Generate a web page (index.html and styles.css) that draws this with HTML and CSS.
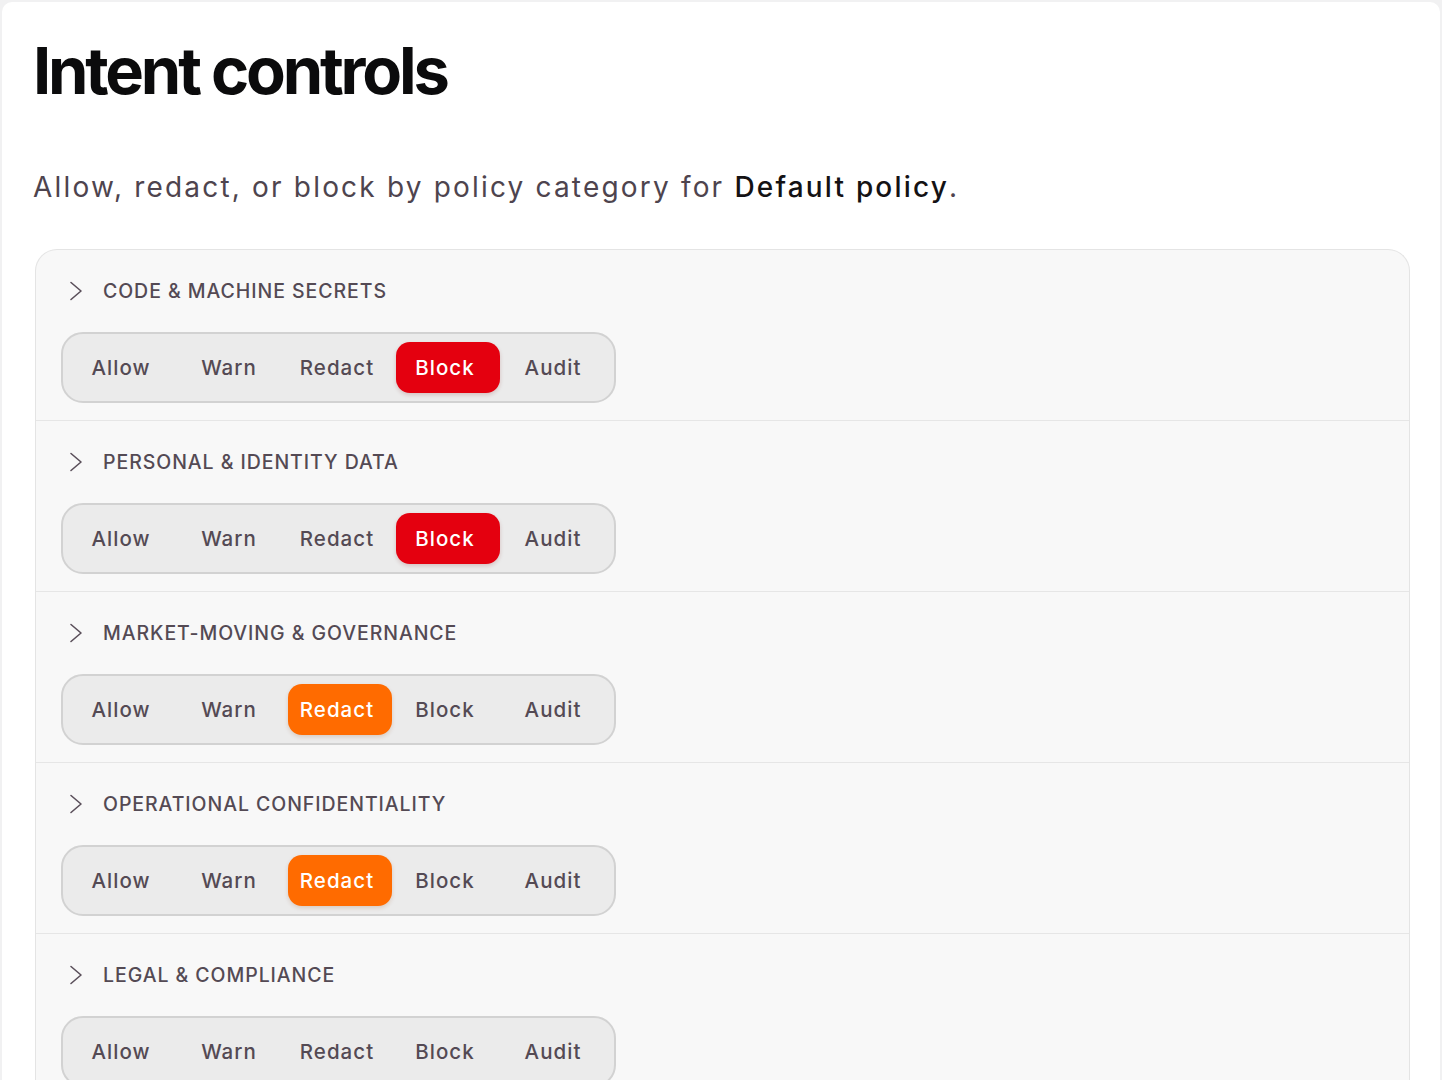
FILE: index.html
```html
<!DOCTYPE html>
<html lang="en">
<head>
<meta charset="utf-8">
<title>Intent controls</title>
<link rel="stylesheet" href="styles.css">
</head>
<body>
<main class="card">
  <h1 class="title">Intent controls</h1>
  <p class="subtitle">Allow, redact, or block by policy category for <strong>Default policy</strong>.</p>

  <section class="panel">
    <div class="group">
      <div class="group-head">
        <svg class="chev" width="16" height="20" viewBox="0 0 16 20"><path d="M3 1.5 L13 10 L3 18.5" fill="none" stroke="currentColor" stroke-width="1.6" stroke-linecap="round" stroke-linejoin="round"/></svg>
        <span class="group-label">Code &amp; machine secrets</span>
      </div>
      <div class="seg">
        <button class="opt">Allow</button><button class="opt">Warn</button><button class="opt">Redact</button><button class="opt opt-block">Block</button><button class="opt">Audit</button>
      </div>
    </div>
    <div class="group">
      <div class="group-head">
        <svg class="chev" width="16" height="20" viewBox="0 0 16 20"><path d="M3 1.5 L13 10 L3 18.5" fill="none" stroke="currentColor" stroke-width="1.6" stroke-linecap="round" stroke-linejoin="round"/></svg>
        <span class="group-label">Personal &amp; identity data</span>
      </div>
      <div class="seg">
        <button class="opt">Allow</button><button class="opt">Warn</button><button class="opt">Redact</button><button class="opt opt-block">Block</button><button class="opt">Audit</button>
      </div>
    </div>
    <div class="group">
      <div class="group-head">
        <svg class="chev" width="16" height="20" viewBox="0 0 16 20"><path d="M3 1.5 L13 10 L3 18.5" fill="none" stroke="currentColor" stroke-width="1.6" stroke-linecap="round" stroke-linejoin="round"/></svg>
        <span class="group-label">Market-moving &amp; governance</span>
      </div>
      <div class="seg">
        <button class="opt">Allow</button><button class="opt">Warn</button><button class="opt opt-redact">Redact</button><button class="opt">Block</button><button class="opt">Audit</button>
      </div>
    </div>
    <div class="group">
      <div class="group-head">
        <svg class="chev" width="16" height="20" viewBox="0 0 16 20"><path d="M3 1.5 L13 10 L3 18.5" fill="none" stroke="currentColor" stroke-width="1.6" stroke-linecap="round" stroke-linejoin="round"/></svg>
        <span class="group-label">Operational confidentiality</span>
      </div>
      <div class="seg">
        <button class="opt">Allow</button><button class="opt">Warn</button><button class="opt opt-redact">Redact</button><button class="opt">Block</button><button class="opt">Audit</button>
      </div>
    </div>
    <div class="group">
      <div class="group-head">
        <svg class="chev" width="16" height="20" viewBox="0 0 16 20"><path d="M3 1.5 L13 10 L3 18.5" fill="none" stroke="currentColor" stroke-width="1.6" stroke-linecap="round" stroke-linejoin="round"/></svg>
        <span class="group-label">Legal &amp; compliance</span>
      </div>
      <div class="seg">
        <button class="opt">Allow</button><button class="opt">Warn</button><button class="opt">Redact</button><button class="opt">Block</button><button class="opt">Audit</button>
      </div>
    </div>
  </section>
</main>
</body>
</html>
```

FILE: styles.css
```css
* { box-sizing: border-box; }
html, body { height: 100%; }
body {
  margin: 0;
  background: #f1f1f2;
  font-family: Inter, "Noto Sans", "DejaVu Sans", sans-serif;
  color: #544a54;
  overflow: hidden;
}
.card {
  margin: 2px 2px 0 2px;
  min-height: 1076px;
  background: #ffffff;
  border-radius: 10px;
  padding: 31px 31px 0 31px;
}
.title {
  margin: 0;
  font-size: 65px;
  line-height: 76px;
  font-weight: 700;
  letter-spacing: -0.049em;
  color: #0b0b0c;
}
.subtitle {
  margin: 58px 0 0 0;
  font-size: 28px;
  line-height: 40px;
  color: #4e444e;
  letter-spacing: 0.078em;
}
.subtitle strong {
  font-weight: 500;
  color: #141214;
}
.panel {
  margin-top: 42px;
  margin-left: 2px;
  width: 1375px;
  background: #f8f8f8;
  border: 1.5px solid #e4e4e4;
  border-bottom: none;
  border-radius: 22px 22px 0 0;
}
.group {
  padding: 23px 0 17px 25px;
  border-bottom: 1.5px solid #e6e6e6;
}
.group-head {
  height: 36px;
  display: flex;
  align-items: center;
  padding-left: 7px;
  gap: 19px;
  color: #5a4f5a;
}
.chev { flex: none; }
.group-label {
  text-transform: uppercase;
  font-size: 19.5px;
  font-weight: 500;
  letter-spacing: 0.048em;
  color: #544a54;
}
.seg {
  margin-top: 23px;
  display: inline-flex;
  gap: 4px;
  padding: 8px 6px 8px 9px;
  height: 71px;
  background: #ebebeb;
  border: 2px solid #d2d2d2;
  border-radius: 22px;
}
.opt {
  width: 104px;
  height: 51px;
  border: none;
  background: transparent;
  font-family: inherit;
  font-size: 20.5px;
  font-weight: 500;
  color: #544a54;
  border-radius: 14px;
  padding: 0 6px 0 0;
  letter-spacing: 0.05em;
}
.opt-block {
  background: #e4000f;
  color: #ffffff;
  box-shadow: 0 2px 4px rgba(120, 0, 0, 0.18);
}
.opt-redact {
  background: #ff6b00;
  color: #ffffff;
  box-shadow: 0 2px 4px rgba(140, 60, 0, 0.18);
}
```
